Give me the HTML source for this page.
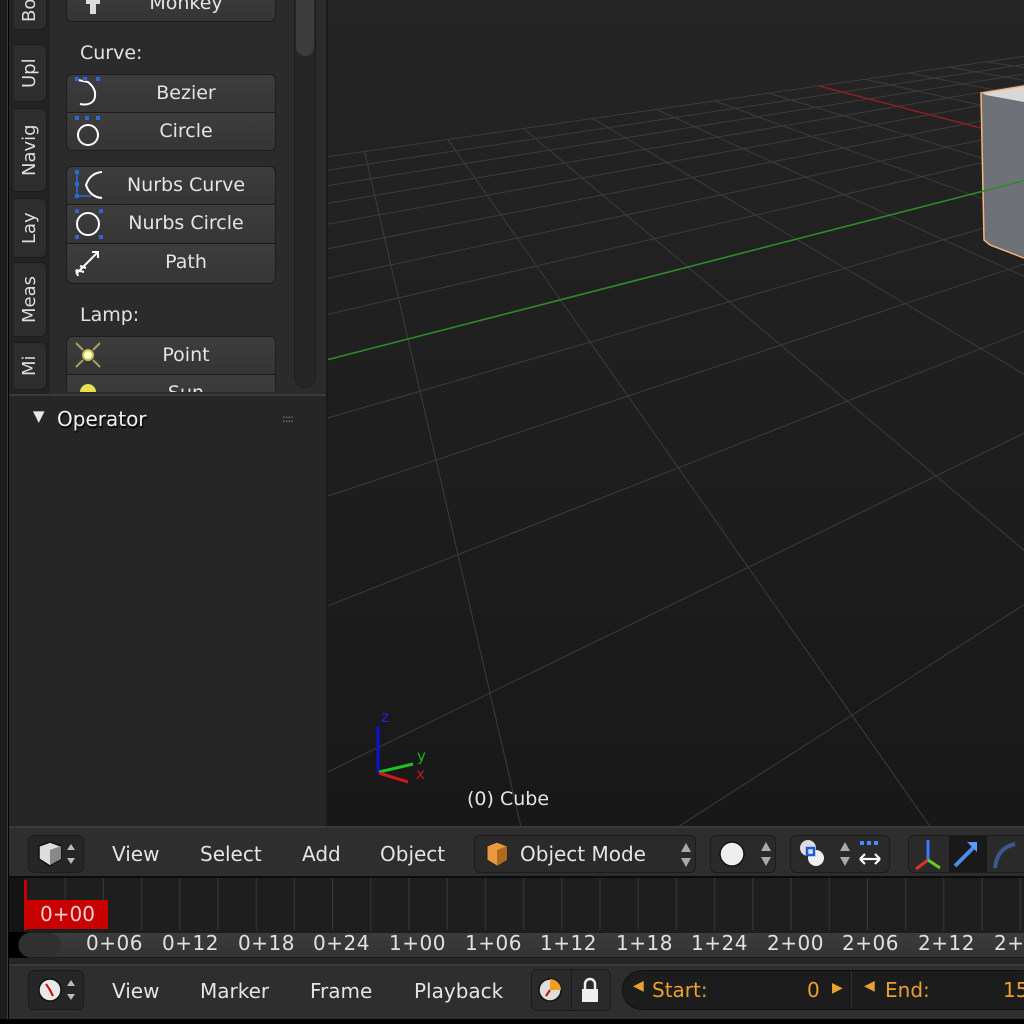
<!DOCTYPE html>
<html><head><meta charset="utf-8"><style>
*{margin:0;padding:0;box-sizing:border-box}
html{overflow:hidden;width:1024px;height:1024px}
body{width:1024px;height:1024px;overflow:hidden;background:#000;font-family:"DejaVu Sans","Liberation Sans",sans-serif;position:relative}
.a{position:absolute}
.t{color:#e2e2e2;white-space:nowrap}
.btn{position:absolute;left:66px;width:210px;background:linear-gradient(#3d3d3d,#353535);border:1px solid #1c1c1c;color:#e4e4e4;font-size:19px;text-align:center;line-height:36px;padding-left:30px}
.tab{position:absolute;left:14px;width:33px;background:#2d2d2d;border:1px solid #1b1b1b;border-right:none;border-radius:6px 0 0 6px;color:#ddd;font-size:18px;writing-mode:vertical-rl;transform:rotate(180deg);text-align:center;line-height:31px}
.menu{position:absolute;color:#e4e4e4;font-size:20px;top:0}
.hb{position:absolute;background:#262626;border:1px solid #1c1c1c;border-radius:6px}
.lab{position:absolute;top:931px;color:#e0e0e0;font-size:20px;letter-spacing:.5px}
</style></head><body>

<!-- 3D viewport -->
<div class="a" style="left:326px;top:0;width:698px;height:828px;background:linear-gradient(#252525,#181818);overflow:hidden">
<svg id="vp" width="698" height="828" viewBox="326 0 698 828" style="position:absolute;left:0;top:0">
<g id="grid" stroke="#3c3c3c" stroke-width="1" fill="none"></g>
<line id="redax" stroke="#8a1e1e" stroke-width="1.6"/>
<polygon points="981,94 1024,87 1024,257 990,245 984,240" fill="#6e7177"/>
<polygon points="982,93 1024,86 1024,102 986,95" fill="#d8d8d8"/>
<polyline points="1024,86 981,93 984,240 990,245 1024,258" fill="none" stroke="#f3b57a" stroke-width="1.5"/>
<line id="greenax" stroke="#2c8c2c" stroke-width="1.6"/>
<line x1="378" y1="726" x2="378" y2="773" stroke="#1010d8" stroke-width="3"/>
<line x1="379" y1="772" x2="413" y2="764" stroke="#20c020" stroke-width="3"/>
<line x1="379" y1="773" x2="408" y2="782" stroke="#d01818" stroke-width="3"/>
<text x="381" y="722" fill="#2020e0" font-size="15" font-family="DejaVu Sans">z</text>
<text x="417" y="761" fill="#20b020" font-size="15" font-family="DejaVu Sans">y</text>
<text x="416" y="779" fill="#c01818" font-size="15" font-family="DejaVu Sans">x</text>
<text x="467" y="805" fill="#e4e4e4" font-size="19" font-family="DejaVu Sans">(0) Cube</text>
</svg>
</div>

<!-- left frame -->
<div class="a" style="left:0;top:0;width:8px;height:1019px;background:#1d1d1d;border-right:1px solid #3a3a3a"></div>
<!-- tab strip -->
<div class="a" style="left:9px;top:0;width:41px;height:394px;background:#232323"></div>
<div class="tab" style="top:-10px;height:40px">Bo</div>
<div class="tab" style="top:44px;height:58px">Upl</div>
<div class="tab" style="top:108px;height:84px">Navig</div>
<div class="tab" style="top:198px;height:60px">Lay</div>
<div class="tab" style="top:262px;height:75px">Meas</div>
<div class="tab" style="top:342px;height:48px">Mi</div>
<!-- tool region -->
<div class="a" style="left:50px;top:0;width:276px;height:394px;background:#2b2b2b;overflow:hidden">
 <div class="a" style="left:244px;top:-10px;width:22px;height:398px;border:1px solid #1e1e1e;border-radius:11px;background:#262626"></div>
 <div class="a" style="left:246px;top:-8px;width:18px;height:64px;border-radius:9px;background:#3c3c3c"></div>
</div>
<div class="a" style="left:50px;top:0;width:276px;height:392px;overflow:hidden">
 <div class="btn" style="left:16px;top:-16px;height:38px;border-radius:0 0 6px 6px">Monkey</div>
 <div class="t a" style="left:30px;top:42px;font-size:19px">Curve:</div>
 <div class="btn" style="left:16px;top:74px;height:39px;border-radius:6px 6px 0 0">Bezier</div>
 <div class="btn" style="left:16px;top:112px;height:39px;border-radius:0 0 6px 6px">Circle</div>
 <div class="btn" style="left:16px;top:166px;height:39px;border-radius:6px 6px 0 0">Nurbs Curve</div>
 <div class="btn" style="left:16px;top:204px;height:40px;border-radius:0">Nurbs Circle</div>
 <div class="btn" style="left:16px;top:243px;height:41px;border-radius:0 0 6px 6px">Path</div>
 <div class="t a" style="left:30px;top:304px;font-size:19px">Lamp:</div>
 <div class="btn" style="left:16px;top:336px;height:39px;border-radius:6px 6px 0 0">Point</div>
 <div class="btn" style="left:16px;top:374px;height:39px;border-radius:0">Sun</div>
 <svg class="a" style="left:0;top:0" width="276" height="392">
  <g fill="#ddd"><path d="M36 -4h14v8h-4v10h-6v-10h-4z"/></g>
  <g stroke="#fff" stroke-width="2" fill="none">
   <path d="M28 80 L38 82 Q48 90 44 100 Q40 106 30 104"/>
   <circle cx="38" cy="135" r="10"/>
   <path d="M52 172 Q40 173 36 185 Q40 197 52 198"/>
   <circle cx="38" cy="224" r="11"/>
   <path d="M26 274 L48 252 M42 252h6v6 M30 266l6 2 M26 270l8 2 M28 276l-2-6"/>
  </g>
  <g fill="#2a6ad8"><rect x="25" y="77" width="4" height="4"/><rect x="33" y="77" width="4" height="4"/><rect x="46" y="77" width="4" height="4"/>
  <rect x="25" y="116" width="4" height="4"/><rect x="35" y="116" width="4" height="4"/><rect x="46" y="116" width="4" height="4"/>
  <rect x="25" y="170" width="4" height="4"/><rect x="25" y="194" width="4" height="4"/><rect x="25" y="182" width="4" height="4"/>
  <rect x="25" y="209" width="4" height="4"/><rect x="49" y="209" width="4" height="4"/><rect x="25" y="235" width="4" height="4"/><rect x="49" y="235" width="4" height="4"/></g>
  <path d="M27 172v24h14" stroke="#2a6ad8" stroke-width="1.5" fill="none"/>
  <g stroke="#a8a060" stroke-width="2" fill="none"><path d="M26 343l7 7 M50 343l-7 7 M26 367l7-7 M50 367l-7-7"/></g>
  <circle cx="38" cy="355" r="5" fill="#ffffc0" stroke="#c8c060" stroke-width="2"/>
  <circle cx="38" cy="392" r="8" fill="#e8e050"/>
 </svg>
</div>
<div class="a" style="left:326px;top:0;width:2px;height:828px;background:#1a1a1a"></div>
<!-- operator region -->
<div class="a" style="left:9px;top:394px;width:317px;height:434px;background:#262626;border-top:2px solid #3a3a3a"></div>
<div class="a" style="left:33px;top:407px;color:#e8e8e8;font-size:15px">&#9660;</div>
<div class="a" style="left:57px;top:407px;color:#f2f2f2;font-size:20px;text-shadow:1px 2px 1px #000">Operator</div>
<div class="a" style="left:282px;top:412px;color:#888;font-size:11px;letter-spacing:-1px">::::</div>

<!-- 3D header -->
<div class="a" style="left:9px;top:826px;width:1015px;height:52px;background:#2e2e2e;border-top:2px solid #3a3a3a;border-bottom:2px solid #0c0c0c;overflow:hidden">
 <div class="hb" style="left:19px;top:7px;width:56px;height:38px"></div>
 <svg class="a" style="left:28px;top:12px" width="50" height="30"><path d="M2 6l11-4 11 4v13l-11 7-11-7z" fill="#ddd" stroke="#111" stroke-width="1.5"/><path d="M13 10v15l11-6v-13z" fill="#888"/><path d="M34 4l4 6h-8z M34 24l4-6h-8z" fill="#bbb"/></svg>
 <div class="menu" style="left:103px;top:14px">View</div>
 <div class="menu" style="left:191px;top:14px">Select</div>
 <div class="menu" style="left:293px;top:14px">Add</div>
 <div class="menu" style="left:371px;top:14px">Object</div>
 <div class="hb" style="left:465px;top:7px;width:222px;height:38px;background:#2a2a2a"></div>
 <svg class="a" style="left:475px;top:13px" width="30" height="28"><path d="M3 5l10-4 10 4v14l-10 6-10-6z" fill="#e89a40" stroke="#222" stroke-width="1"/><path d="M13 9v16l10-6v-14z" fill="#b06a20"/></svg>
 <div class="menu" style="left:511px;top:14px">Object Mode</div>
 <svg class="a" style="left:670px;top:14px" width="14" height="26"><path d="M7 1l5 9h-10z M7 25l5-9h-10z" fill="#aaa"/></svg>
 <div class="hb" style="left:701px;top:7px;width:66px;height:38px;background:#2a2a2a"></div>
 <svg class="a" style="left:708px;top:12px" width="56" height="28"><circle cx="15" cy="14" r="12" fill="#eee" stroke="#111" stroke-width="1.5"/><path d="M49 2l5 9h-10z M49 26l5-9h-10z" fill="#aaa"/></svg>
 <div class="hb" style="left:781px;top:7px;width:100px;height:38px;background:#2a2a2a"></div>
 <svg class="a" style="left:783px;top:10px" width="100" height="32"><circle cx="16" cy="10" r="8" fill="#ddd"/><circle cx="24" cy="20" r="8" fill="#eee"/><rect x="15" y="10" width="7" height="7" fill="none" stroke="#1a5ce0" stroke-width="2.5"/><path d="M53 4l5 9h-10z M53 28l5-9h-10z" fill="#aaa"/><g fill="#4a8aff"><rect x="68" y="3" width="4" height="4"/><rect x="75" y="3" width="4" height="4"/><rect x="82" y="3" width="4" height="4"/></g><path d="M68 21h20 M68 21l5-5 M68 21l5 5 M88 21l-5-5 M88 21l-5 5" stroke="#fff" stroke-width="2.2" fill="none"/></svg>
 <div class="hb" style="left:899px;top:7px;width:130px;height:38px;background:#2a2a2a"></div>
 <div class="a" style="left:940px;top:8px;width:38px;height:36px;background:#191919"></div>
 <svg class="a" style="left:900px;top:8px" width="115" height="36"><path d="M19 4v20" stroke="#3a7aff" stroke-width="3"/><path d="M19 24l-12 9" stroke="#e03030" stroke-width="3"/><path d="M19 24l12 8" stroke="#60d020" stroke-width="3"/><path d="M46 30l20-20" stroke="#4a8ae8" stroke-width="4"/><path d="M58 6h10v10z" fill="#5a9af8"/><path d="M86 32q2-20 20-24" stroke="#3a5a88" stroke-width="4" fill="none"/></svg>
</div>

<!-- timeline -->
<div class="a" style="left:9px;top:878px;width:1015px;height:54px;background:#1e1e1e"></div>
<div class="a" style="left:9px;top:878px;width:15px;height:54px;background:#141414"></div>
<svg class="a" style="left:0;top:878px" width="1024" height="52" id="tl"></svg>
<div class="a" style="left:24px;top:880px;width:3px;height:50px;background:#c80000"></div>
<div class="a" style="left:24px;top:900px;width:84px;height:29px;background:#c80000;color:#f0d0d0;font-size:20px;line-height:29px;padding-left:16px">0+00</div>
<div class="a" style="left:9px;top:930px;width:1015px;height:36px;overflow:hidden">
 <div class="a" style="left:9px;top:2px;width:1030px;height:26px;border-radius:13px;background:linear-gradient(#3c3c3c,#333);border:1px solid #1c1c1c"></div>
 <div class="a" style="left:10px;top:3px;width:42px;height:24px;border-radius:12px;background:#303030"></div>
 <div class="a" style="left:0;top:28px;width:1015px;height:8px;background:#262626;border-bottom:2px solid #3a3a3a"></div>
</div>
<div class="lab" style="left:86px">0+06</div><div class="lab" style="left:162px">0+12</div><div class="lab" style="left:238px">0+18</div><div class="lab" style="left:313px">0+24</div><div class="lab" style="left:389px">1+00</div><div class="lab" style="left:465px">1+06</div><div class="lab" style="left:540px">1+12</div><div class="lab" style="left:616px">1+18</div><div class="lab" style="left:691px">1+24</div><div class="lab" style="left:767px">2+00</div><div class="lab" style="left:842px">2+06</div><div class="lab" style="left:918px">2+12</div><div class="lab" style="left:994px">2+</div>

<!-- bottom header -->
<div class="a" style="left:9px;top:966px;width:1015px;height:53px;background:#2e2e2e;overflow:hidden">
 <div class="hb" style="left:19px;top:4px;width:56px;height:40px"></div>
 <svg class="a" style="left:28px;top:10px" width="50" height="30"><circle cx="13" cy="14" r="11" fill="#e8e8e8" stroke="#111" stroke-width="1.5"/><path d="M13 14l-4-6 M13 14l3 6" stroke="#c00" stroke-width="2"/><path d="M34 4l4 6h-8z M34 24l4-6h-8z" fill="#bbb"/></svg>
 <div class="menu" style="left:103px;top:13px">View</div>
 <div class="menu" style="left:191px;top:13px">Marker</div>
 <div class="menu" style="left:301px;top:13px">Frame</div>
 <div class="menu" style="left:405px;top:13px">Playback</div>
 <div class="hb" style="left:522px;top:3px;width:80px;height:42px;background:#2a2a2a"></div>
 <div class="a" style="left:562px;top:4px;width:1px;height:40px;background:#1c1c1c"></div>
 <svg class="a" style="left:527px;top:10px" width="74" height="30"><circle cx="14" cy="14" r="11" fill="#ddd" stroke="#111" stroke-width="1.5"/><path d="M14 14V3a11 11 0 0 1 11 11z" fill="#f0a020"/><path d="M14 14l-4 6" stroke="#c00" stroke-width="2"/><rect x="46" y="13" width="16" height="13" fill="#eee"/><path d="M49 13v-5a5 5 0 0 1 10 0v5" stroke="#eee" stroke-width="2.5" fill="none"/></svg>
 <div class="a" style="left:613px;top:4px;width:420px;height:40px;border-radius:20px;background:#1c1c1c;border:1px solid #111"></div>
 <div class="a" style="left:842px;top:6px;width:1px;height:36px;background:#333"></div>
 <div class="a" style="left:624px;top:12px;color:#e8a030;font-size:14px">&#9664;</div>
 <div class="a" style="left:643px;top:12px;color:#e8a030;font-size:20px">Start:</div>
 <div class="a" style="left:798px;top:12px;color:#e8a030;font-size:20px">0</div>
 <div class="a" style="left:823px;top:14px;color:#e8a030;font-size:14px">&#9654;</div>
 <div class="a" style="left:855px;top:12px;color:#e8a030;font-size:14px">&#9664;</div>
 <div class="a" style="left:876px;top:12px;color:#e8a030;font-size:20px">End:</div>
 <div class="a" style="left:994px;top:12px;color:#e8a030;font-size:20px">15</div>
</div>
<div class="a" style="left:0;top:1019px;width:1024px;height:5px;background:#000"></div>

<script>
(function(){
 var P=[[0,0,408,339],[2,0,688,267],[0,4,490,693],[2,4,936,476]];
 var A=[],b=[];
 P.forEach(function(p){var x=p[0],y=p[1],u=p[2],v=p[3];
  A.push([x,y,1,0,0,0,-u*x,-u*y]);b.push(u);
  A.push([0,0,0,x,y,1,-v*x,-v*y]);b.push(v);});
 var n=8;for(var i=0;i<n;i++){var m=i;for(var k=i+1;k<n;k++)if(Math.abs(A[k][i])>Math.abs(A[m][i]))m=k;
  var t=A[i];A[i]=A[m];A[m]=t;t=b[i];b[i]=b[m];b[m]=t;
  for(var k=0;k<n;k++){if(k==i)continue;var f=A[k][i]/A[i][i];for(var c=i;c<n;c++)A[k][c]-=f*A[i][c];b[k]-=f*b[i];}}
 var h=[];for(i=0;i<n;i++)h.push(b[i]/A[i][i]);h.push(1);
 function W(x,y){return h[6]*x+h[7]*y+1;}
 function T(x,y){var w=W(x,y);return[(h[0]*x+h[1]*y+h[2])/w,(h[3]*x+h[4]*y+h[5])/w];}
 var g=document.getElementById('grid'),NS='http://www.w3.org/2000/svg',N=8,I0=7;
 function L(a,c,el){var e=el||document.createElementNS(NS,'line');e.setAttribute('x1',a[0]);e.setAttribute('y1',a[1]);e.setAttribute('x2',c[0]);e.setAttribute('y2',c[1]);if(!el)g.appendChild(e);}
 function jEnd(i){var j=N;var w0=W(i,0);while(j>0&&W(i,j)<0.06*Math.abs(w0))j-=0.05;return j;}
 for(var j=-N;j<=N;j++){var i1=I0-N,i2=I0+N;
  if(W(i1,j)<=0.01||W(i2,j)<=0.01)continue;
  if(j==0){L(T(i1,j),T(i2,j),document.getElementById('greenax'));continue;}
  L(T(i1,j),T(i2,j));}
 for(var i=I0-N;i<=I0+N;i++){var je=jEnd(i);
  if(i==I0){L(T(i,-N),T(i,je),document.getElementById('redax'));continue;}
  L(T(i,-N),T(i,je));}
 var tl=document.getElementById('tl'),s='';
 for(var k=1;k<27;k++){var x=27+38.2*k;if(x>1024)break;s+='<line x1="'+x+'" y1="0" x2="'+x+'" y2="52" stroke="#333" stroke-width="1.3"/>';}
 tl.innerHTML=s;
})();
</script>
</body></html>
